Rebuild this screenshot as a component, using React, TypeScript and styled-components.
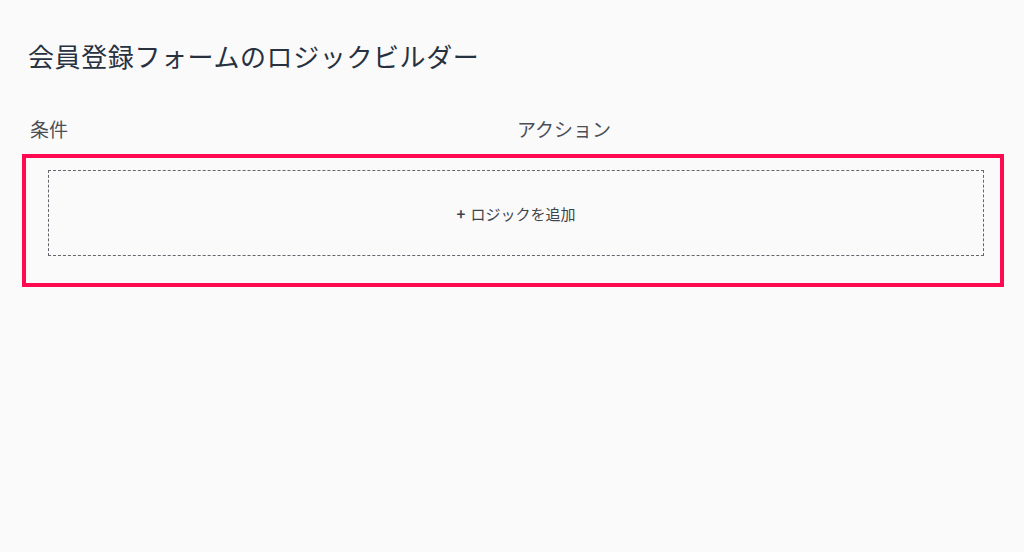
import React from "react";
import styled, { createGlobalStyle } from "styled-components";

const Global = createGlobalStyle`
  html, body {
    margin: 0;
    padding: 0;
    background: #fafafa;
  }
  body {
    font-family: "Noto Sans CJK JP", "Noto Sans", sans-serif;
  }
`;

const Page = styled.div`
  width: 1024px;
  height: 552px;
  box-sizing: border-box;
  padding: 38px 20px 0 22px;
  display: flex;
  flex-direction: column;
`;

const Title = styled.h1`
  margin: 0 0 0 6px;
  font-size: 26px;
  line-height: 36px;
  font-weight: 400;
  color: #27313f;
  letter-spacing: 0.6px;
`;

const Columns = styled.div`
  display: grid;
  grid-template-columns: 487px 1fr;
  margin: 42px 0 0 8px;
  height: 38px;
  align-items: start;
`;

const ColumnLabel = styled.span`
  font-size: 19px;
  line-height: 26px;
  color: #4a4f57;
`;

const Highlight = styled.section`
  width: 982px;
  box-sizing: border-box;
  border: 4px solid #ff0a50;
  padding: 12px 16px 27px 22px;
`;

const AddButton = styled.button`
  display: flex;
  align-items: center;
  justify-content: center;
  width: 100%;
  height: 86px;
  margin: 0;
  box-sizing: border-box;
  border: 1px dashed #63676d;
  background: transparent;
  font-family: inherit;
  font-size: 15px;
  color: #3f444b;
  cursor: pointer;
  gap: 5px;
`;

const Plus = styled.span`
  font-weight: 700;
  font-size: 15px;
`;

export default function App() {
  return (
    <>
      <Global />
      <Page>
        <Title>会員登録フォームのロジックビルダー</Title>
        <Columns>
          <ColumnLabel>条件</ColumnLabel>
          <ColumnLabel>アクション</ColumnLabel>
        </Columns>
        <Highlight>
          <AddButton type="button">
            <Plus>+</Plus>
            <span>ロジックを追加</span>
          </AddButton>
        </Highlight>
      </Page>
    </>
  );
}
